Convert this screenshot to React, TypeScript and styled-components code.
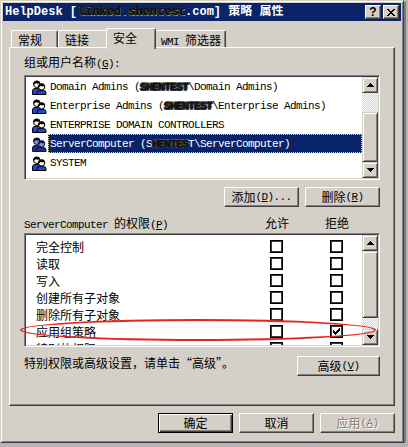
import React from 'react';
import styled, { createGlobalStyle, css } from 'styled-components';

const FACE = '#d4d0c8';
const SHADOW = '#808080';
const DARK = '#404040';
const NAVY = '#0a246a';

const GlobalStyle = createGlobalStyle`
  html, body { margin: 0; padding: 0; }
  body {
    background: #b4b4b4;
    font-family: "Noto Sans CJK SC", "Noto Sans CJK JP", sans-serif;
    font-size: 12px;
    line-height: 14px;
    color: #000;
  }
`;

const Window = styled.div`
  box-sizing: border-box;
  width: 404px;
  height: 443px;
  background: ${FACE};
  border: 1px solid;
  border-color: ${FACE} ${DARK} ${DARK} ${FACE};
  box-shadow: inset 1px 1px #fff, inset -1px -1px ${SHADOW}, 2px 2px 0 #7c7c7c;
  padding: 2px;
  display: flex;
  flex-direction: column;
`;

const TitleBar = styled.div`
  height: 18px;
  flex-shrink: 0;
  background: ${NAVY};
  display: flex;
  align-items: center;
  padding: 0 2px;
  color: #fff;
  font-family: "Liberation Mono", "Noto Sans CJK SC", monospace;
  font-weight: bold;
  font-size: 12px;
  white-space: nowrap;
`;

const TitleText = styled.div`
  flex: 1;
  overflow: hidden;
`;

const TitleScribble = styled.span`
  color: #1b1b1b;
  text-shadow: 1px 0 #000, 0 1px #5a5a5a, -1px 0 #2a2a2a, 1px 1px #d0d0d0;
`;

const CaptionButtons = styled.div`
  display: flex;
  gap: 2px;
`;

const CaptionButton = styled.div`
  box-sizing: border-box;
  width: 16px;
  height: 14px;
  background: ${FACE};
  border: 1px solid;
  border-color: #fff ${DARK} ${DARK} #fff;
  box-shadow: inset -1px -1px ${SHADOW};
  display: flex;
  align-items: center;
  justify-content: center;
  color: #000;
  font-family: "Liberation Sans", Arial, sans-serif;
  font-weight: bold;
  font-size: 12px;
  line-height: 12px;
`;

const Body = styled.div`
  padding: 7px 6px 0;
  display: flex;
  flex-direction: column;
`;

const TabStrip = styled.div`
  position: relative;
  z-index: 2;
  display: flex;
  align-items: flex-end;
  height: 19px;
  padding-left: 2px;
`;

const Tab = styled.div<{ $w: number; $active?: boolean }>`
  position: relative;
  z-index: ${(p) => (p.$active ? 2 : 1)};
  box-sizing: border-box;
  width: ${(p) => p.$w + (p.$active ? 4 : 0)}px;
  height: ${(p) => (p.$active ? 21 : 17)}px;
  margin: 0 ${(p) => (p.$active ? -2 : 0)}px ${(p) => (p.$active ? -2 : 0)}px;
  background: ${FACE};
  border-top: 1px solid #fff;
  border-left: 1px solid #fff;
  border-right: 1px solid ${DARK};
  box-shadow: inset -1px 0 ${SHADOW};
  border-radius: 2px 2px 0 0;
  padding: 2px 0 0 6px;
  line-height: 14px;
  white-space: nowrap;
`;

const Panel = styled.div`
  position: relative;
  z-index: 1;
  box-sizing: border-box;
  width: 386px;
  height: 359px;
  border: 1px solid;
  border-color: #fff ${DARK} ${DARK} #fff;
  box-shadow: inset -1px -1px ${SHADOW};
  padding: 7px 14px 0;
  display: flex;
  flex-direction: column;
`;

const Mono = styled.span`
  font-family: "Liberation Mono", "Courier New", monospace;
  font-size: 11px;
  letter-spacing: -0.6px;
`;

const FieldLabel = styled.div`
  height: 14px;
  line-height: 14px;
  white-space: nowrap;
`;

const Sunken = styled.div<{ $h: number; $mt: number }>`
  box-sizing: border-box;
  width: 356px;
  height: ${(p) => p.$h}px;
  margin-top: ${(p) => p.$mt}px;
  flex-shrink: 0;
  border: 1px solid;
  border-color: ${SHADOW} #fff #fff ${SHADOW};
  box-shadow: inset 1px 1px ${DARK}, inset -1px -1px ${FACE};
  background: #fff;
  padding: 1px;
  display: flex;
  overflow: hidden;
`;

const ListArea = styled.div<{ $pt: number }>`
  flex: 1;
  overflow: hidden;
  display: flex;
  flex-direction: column;
  padding-top: ${(p) => p.$pt}px;
`;

const GroupRow = styled.div`
  height: 19px;
  flex-shrink: 0;
  display: flex;
  align-items: center;
  padding-left: 5px;
`;

const IconBox = styled.span`
  width: 16px;
  height: 16px;
  flex-shrink: 0;
  display: block;
  svg { display: block; }
`;

const GroupName = styled.div<{ $selected?: boolean }>`
  flex: 1;
  height: 100%;
  margin-left: 1px;
  padding: 0 2px;
  display: flex;
  align-items: center;
  white-space: nowrap;
  font-family: "Liberation Mono", "Courier New", monospace;
  font-size: 11px;
  letter-spacing: -0.6px;
  ${(p) =>
    p.$selected &&
    css`
      background: ${NAVY};
      color: #fff;
      outline: 1px dotted #e6d48c;
      outline-offset: -1px;
    `}
`;

const Scribble = styled.span`
  color: #111;
  text-shadow: 1px 0 #111, -1px 0 #2a2a2a, 0 1px #222, 0 -1px #4a4a4a, 1px 1px #333,
    -1px 1px #666, 2px -1px #777;
`;

const ScrollTrack = styled.div`
  width: 16px;
  flex-shrink: 0;
  display: flex;
  flex-direction: column;
  background-color: ${FACE};
  background-image: repeating-conic-gradient(#fff 0% 25%, ${FACE} 0% 50%);
  background-size: 2px 2px;
`;

const raised = css`
  box-sizing: border-box;
  background: ${FACE};
  border: 1px solid;
  border-color: ${FACE} ${DARK} ${DARK} ${FACE};
  box-shadow: inset 1px 1px #fff, inset -1px -1px ${SHADOW};
`;

const ArrowButton = styled.div`
  ${raised};
  height: 16px;
  flex-shrink: 0;
  display: flex;
  align-items: center;
  justify-content: center;
  svg { display: block; }
`;

const Spacer = styled.div<{ $h: number }>`
  height: ${(p) => p.$h}px;
  flex-shrink: 0;
`;

const Filler = styled.div`
  flex: 1;
`;

const Thumb = styled.div<{ $h: number }>`
  ${raised};
  height: ${(p) => p.$h}px;
  flex-shrink: 0;
`;

const ButtonRow = styled.div<{ $mt: number }>`
  display: flex;
  justify-content: flex-end;
  gap: 6px;
  margin-top: ${(p) => p.$mt}px;
  flex-shrink: 0;
`;

const Button = styled.button<{ $w?: number; $default?: boolean }>`
  box-sizing: border-box;
  width: ${(p) => p.$w ?? 75}px;
  height: 20px;
  padding: 0;
  margin: 0;
  background: ${FACE};
  color: #000;
  font-family: inherit;
  font-size: 12px;
  line-height: 14px;
  border: 1px solid;
  border-color: #fff ${DARK} ${DARK} #fff;
  box-shadow: inset -1px -1px ${SHADOW};
  display: flex;
  align-items: center;
  justify-content: center;
  white-space: nowrap;
  ${(p) =>
    p.$default &&
    css`
      border-color: #000;
      box-shadow: inset 1px 1px #fff, inset -1px -1px ${DARK}, inset -2px -2px ${SHADOW};
    `}
  &:disabled {
    color: ${SHADOW};
    text-shadow: 1px 1px #fff;
  }
`;

const PermHeader = styled.div`
  display: grid;
  grid-template-columns: 240px 26px 34px 26px;
  height: 14px;
  line-height: 14px;
  margin-top: 9px;
  white-space: nowrap;
`;

const ColHead = styled.span`
  text-align: center;
`;

const PermRow = styled.div`
  display: grid;
  grid-template-columns: 234px 13px 47px 13px;
  align-items: center;
  height: 17px;
  flex-shrink: 0;
  padding-left: 10px;
  white-space: nowrap;
`;

const CheckBox = styled.span`
  box-sizing: border-box;
  width: 13px;
  height: 13px;
  background: #fff;
  border: 1px solid #000;
  box-shadow: inset 0 0 0 1px #3c3c3c;
  display: flex;
  align-items: center;
  justify-content: center;
  svg { display: block; }
`;

const AdvancedRow = styled.div`
  display: flex;
  justify-content: space-between;
  align-items: flex-start;
  height: 20px;
  margin-top: 9px;
  line-height: 14px;
`;

const Highlight = styled.div`
  position: absolute;
  left: 10px;
  top: 271px;
  width: 356px;
  height: 22px;
  box-sizing: border-box;
  border: 2px solid #e3261d;
  border-radius: 50%;
  pointer-events: none;
`;

const CloseGlyph = () => (
  <svg width="8" height="7" viewBox="0 0 8 7" shapeRendering="crispEdges">
    <path
      d="M0 0h2v1h-2zM6 0h2v1h-2zM1 1h2v1h-2zM5 1h2v1h-2zM2 2h4v1h-4zM3 3h2v1h-2zM2 4h4v1h-4zM1 5h2v1h-2zM5 5h2v1h-2zM0 6h2v1h-2zM6 6h2v1h-2z"
      fill="#000"
    />
  </svg>
);

const Arrow = ({ down }: { down?: boolean }) => (
  <svg width="7" height="4" viewBox="0 0 7 4" shapeRendering="crispEdges">
    {down ? (
      <path d="M0 0h7v1h-7zM1 1h5v1h-5zM2 2h3v1h-3zM3 3h1v1h-1z" fill="#000" />
    ) : (
      <path d="M3 0h1v1h-1zM2 1h3v1h-3zM1 2h5v1h-5zM0 3h7v1h-7z" fill="#000" />
    )}
  </svg>
);

const CheckMark = () => (
  <svg width="7" height="7" viewBox="0 0 7 7" shapeRendering="crispEdges">
    <path
      d="M6 0h1v1h-1zM5 1h2v1h-2zM0 2h1v1h-1zM4 2h3v1h-3zM0 3h2v1h-2zM3 3h3v1h-3zM0 4h5v1h-5zM1 5h3v1h-3zM2 6h1v1h-1z"
      fill="#000"
    />
  </svg>
);

const GroupIcon = ({ selected }: { selected?: boolean }) => {
  const skin = selected ? '#8a94c4' : '#fff4dc';
  const body = selected ? '#1a2e86' : '#1f46d8';
  const hair = selected ? '#0a1440' : '#000';
  return (
    <IconBox>
      <svg width="16" height="16" viewBox="0 0 16 16">
        <path d="M1.5 15.5 V12 Q1.5 9.5 4 9.5 H7.5 Q10 9.5 10 12 V15.5 Z" fill={body} stroke={hair} />
        <circle cx="5.8" cy="5.2" r="3.3" fill={skin} stroke={hair} />
        <path d="M2.4 5.4 A3.4 3.4 0 0 1 9.2 5.4 L8 4.3 L6.5 5 L5 4.1 L3.4 5.6 Z" fill={hair} />
        <path d="M6 15.5 V13.6 Q6 11.6 8.5 11.6 H12.6 Q15 11.6 15 13.6 V15.5 Z" fill={body} stroke={hair} />
        <circle cx="10.6" cy="7.8" r="3.2" fill={skin} stroke={hair} />
        <path d="M7.3 8 A3.3 3.3 0 0 1 13.9 8 L12.6 6.9 L11.1 7.5 L9.6 6.7 L8.2 8.3 Z" fill={hair} />
      </svg>
    </IconBox>
  );
};

const ScrollBar = ({ before, thumb }: { before: number; thumb: number }) => (
  <ScrollTrack>
    <ArrowButton>
      <Arrow />
    </ArrowButton>
    <Spacer $h={before} />
    <Thumb $h={thumb} />
    <Filler />
    <ArrowButton>
      <Arrow down />
    </ArrowButton>
  </ScrollTrack>
);

const groups: { selected?: boolean; name: React.ReactNode }[] = [
  { name: <>Domain Admins (<Scribble>SHENTEST</Scribble>\Domain Admins)</> },
  { name: <>Enterprise Admins (<Scribble>SHENTEST</Scribble>\Enterprise Admins)</> },
  { name: <>ENTERPRISE DOMAIN CONTROLLERS</> },
  { selected: true, name: <>ServerComputer (S<Scribble>HENTES</Scribble>T\ServerComputer)</> },
  { name: <>SYSTEM</> },
];

const perms: { name: string; allow?: boolean; deny?: boolean }[] = [
  { name: '完全控制' },
  { name: '读取' },
  { name: '写入' },
  { name: '创建所有子对象' },
  { name: '删除所有子对象' },
  { name: '应用组策略', deny: true },
  { name: '特别的权限' },
];

export default function App() {
  return (
    <>
      <GlobalStyle />
      <Window>
        <TitleBar>
          <TitleText>
            HelpDesk [<TitleScribble>linked.shentest</TitleScribble>.com] 策略 属性
          </TitleText>
          <CaptionButtons>
            <CaptionButton>?</CaptionButton>
            <CaptionButton>
              <CloseGlyph />
            </CaptionButton>
          </CaptionButtons>
        </TitleBar>
        <Body>
          <TabStrip>
            <Tab $w={47}>常规</Tab>
            <Tab $w={50}>链接</Tab>
            <Tab $w={46} $active>
              安全
            </Tab>
            <Tab $w={72}>
              <Mono>WMI </Mono>筛选器
            </Tab>
          </TabStrip>
          <Panel>
            <FieldLabel>
              组或用户名称<Mono>(<u>G</u>):</Mono>
            </FieldLabel>
            <Sunken $h={105} $mt={6}>
              <ListArea $pt={0}>
                {groups.map((g, i) => (
                  <GroupRow key={i}>
                    <GroupIcon selected={g.selected} />
                    <GroupName $selected={g.selected}>{g.name}</GroupName>
                  </GroupRow>
                ))}
              </ListArea>
              <ScrollBar before={19} thumb={50} />
            </Sunken>
            <ButtonRow $mt={7}>
              <Button>
                添加<Mono>(<u>D</u>)...</Mono>
              </Button>
              <Button>
                删除<Mono>(<u>R</u>)</Mono>
              </Button>
            </ButtonRow>
            <PermHeader>
              <span>
                <Mono>ServerComputer </Mono>的权限<Mono>(<u>P</u>)</Mono>
              </span>
              <ColHead>允许</ColHead>
              <span />
              <ColHead>拒绝</ColHead>
            </PermHeader>
            <Sunken $h={114} $mt={3}>
              <ListArea $pt={3}>
                {perms.map((p) => (
                  <PermRow key={p.name}>
                    <span>{p.name}</span>
                    <CheckBox>{p.allow && <CheckMark />}</CheckBox>
                    <span />
                    <CheckBox>{p.deny && <CheckMark />}</CheckBox>
                  </PermRow>
                ))}
              </ListArea>
              <ScrollBar before={0} thumb={67} />
            </Sunken>
            <AdvancedRow>
              <span>特别权限或高级设置，请单击“高级”。</span>
              <Button $w={83}>
                高级<Mono>(<u>V</u>)</Mono>
              </Button>
            </AdvancedRow>
            <Highlight />
          </Panel>
          <ButtonRow $mt={7}>
            <Button $default>确定</Button>
            <Button>取消</Button>
            <Button disabled>
              应用<Mono>(<u>A</u>)</Mono>
            </Button>
          </ButtonRow>
        </Body>
      </Window>
    </>
  );
}
